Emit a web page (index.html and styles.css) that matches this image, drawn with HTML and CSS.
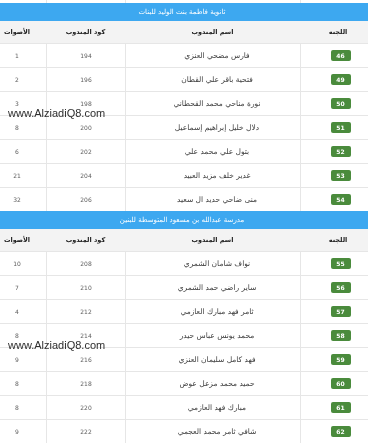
FILE: index.html
```html
<!DOCTYPE html>
<html lang="ar">
<head>
<meta charset="utf-8">
<title>نتائج اللجان</title>
<link rel="stylesheet" href="styles.css">
</head>
<body>
<div class="page">
  <div class="board" dir="rtl">
    <div class="row stub"><div class="cell"></div><div class="cell"></div><div class="cell"></div><div class="cell"></div></div>
  </div>

  <section class="board" dir="rtl">
    <div class="school">ثانوية فاطمة بنت الوليد للبنات</div>
    <div class="row heads"><div class="cell">اللجنه</div><div class="cell">اسم المندوب</div><div class="cell">كود المندوب</div><div class="cell">الأصوات</div></div>
    <div class="row"><div class="cell"><span class="badge">46</span></div><div class="cell name">فارس مضحي العنزي</div><div class="cell num">194</div><div class="cell num">1</div></div>
    <div class="row"><div class="cell"><span class="badge">49</span></div><div class="cell name">فتحية باقر علي القطان</div><div class="cell num">196</div><div class="cell num">2</div></div>
    <div class="row"><div class="cell"><span class="badge">50</span></div><div class="cell name">نورة مناحي محمد القحطاني</div><div class="cell num">198</div><div class="cell num">3</div></div>
    <div class="row"><div class="cell"><span class="badge">51</span></div><div class="cell name">دلال خليل إبراهيم إسماعيل</div><div class="cell num">200</div><div class="cell num">8</div></div>
    <div class="row"><div class="cell"><span class="badge">52</span></div><div class="cell name">بتول علي محمد علي</div><div class="cell num">202</div><div class="cell num">6</div></div>
    <div class="row"><div class="cell"><span class="badge">53</span></div><div class="cell name">غدير خلف مزيد العبيد</div><div class="cell num">204</div><div class="cell num">21</div></div>
    <div class="row"><div class="cell"><span class="badge">54</span></div><div class="cell name">منى ضاحي حديد ال سعيد</div><div class="cell num">206</div><div class="cell num">32</div></div>
  </section>

  <section class="board" dir="rtl">
    <div class="school">مدرسة عبدالله بن مسعود المتوسطة للبنين</div>
    <div class="row heads"><div class="cell">اللجنه</div><div class="cell">اسم المندوب</div><div class="cell">كود المندوب</div><div class="cell">الأصوات</div></div>
    <div class="row"><div class="cell"><span class="badge">55</span></div><div class="cell name">نواف شامان الشمري</div><div class="cell num">208</div><div class="cell num">10</div></div>
    <div class="row"><div class="cell"><span class="badge">56</span></div><div class="cell name">ساير راضي حمد الشمري</div><div class="cell num">210</div><div class="cell num">7</div></div>
    <div class="row"><div class="cell"><span class="badge">57</span></div><div class="cell name">ثامر فهد مبارك العازمي</div><div class="cell num">212</div><div class="cell num">4</div></div>
    <div class="row"><div class="cell"><span class="badge">58</span></div><div class="cell name">محمد يونس عباس حيدر</div><div class="cell num">214</div><div class="cell num">8</div></div>
    <div class="row"><div class="cell"><span class="badge">59</span></div><div class="cell name">فهد كامل سليمان العنزي</div><div class="cell num">216</div><div class="cell num">9</div></div>
    <div class="row"><div class="cell"><span class="badge">60</span></div><div class="cell name">حميد محمد مزعل عوض</div><div class="cell num">218</div><div class="cell num">8</div></div>
    <div class="row"><div class="cell"><span class="badge">61</span></div><div class="cell name">مبارك فهد العازمي</div><div class="cell num">220</div><div class="cell num">8</div></div>
    <div class="row"><div class="cell"><span class="badge">62</span></div><div class="cell name">شافي ثامر محمد العجمي</div><div class="cell num">222</div><div class="cell num">9</div></div>
  </section>

  <div class="watermark wm-1">www.AlziadiQ8.com</div>
  <div class="watermark wm-2">www.AlziadiQ8.com</div>
</div>
</body>
</html>
```

FILE: styles.css
```css
html, body {
  margin: 0;
  padding: 0;
  background: #ffffff;
}
body {
  width: 368px;
  height: 445px;
  overflow: hidden;
  font-family: "DejaVu Sans", "Liberation Sans", sans-serif;
}
.page {
  position: relative;
  width: 368px;
  will-change: transform;
}
.board {
  width: 388px;
  margin-left: -12px;
}
.row {
  display: grid;
  grid-template-columns: 76px 175px 79px 58px;
  height: 24px;
  box-sizing: border-box;
  border-top: 1px solid #e6e6e6;
}
.cell {
  display: flex;
  align-items: center;
  justify-content: center;
  border-left: 1px solid #e6e6e6;
  color: #3d3d3d;
  white-space: nowrap;
}
.cell:last-child { border-left: none; }

.row.stub {
  height: 3px;
  border-top: none;
}

.school {
  height: 18px;
  background: #3da8f0;
  color: #ffffff;
  font-size: 7px;
  line-height: 18px;
  text-align: center;
}
.row.heads {
  height: 22px;
  border-top: none;
  background: #f3f3f3;
}
.heads .cell {
  border-left: none;
  color: #222;
  font-size: 6.5px;
  font-weight: bold;
}
.name {
  font-size: 7.5px;
  padding-left: 8px;
}
.num {
  font-size: 6px;
}
.cell.num { color: #606060; }
.badge {
  display: inline-block;
  width: 20px;
  height: 11px;
  line-height: 11px;
  margin-left: 4px;
  background: #4a8b3c;
  color: #ffffff;
  font-size: 6px;
  font-weight: bold;
  text-align: center;
  border-radius: 2px;
}

.watermark {
  position: absolute;
  left: 8px;
  font-family: "Liberation Sans", Arial, sans-serif;
  font-size: 11px;
  line-height: 13px;
  color: #2e2e2e;
}
.wm-1 { top: 107px; }
.wm-2 { top: 339px; }
```
